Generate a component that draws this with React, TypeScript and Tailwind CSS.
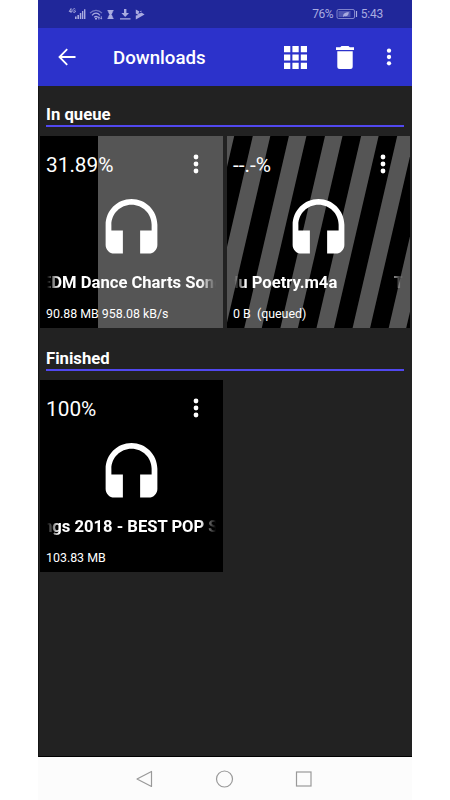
import type { ReactNode } from "react"

const STRIPES = [-10.3, 25.8, 61.9, 98, 134.1, 170.2, 206.3]

function Dots({ className }: { className?: string }) {
  return (
    <svg viewBox="0 0 6 20" fill="currentColor" className={className}>
      <circle cx="3" cy="3" r="2.4" />
      <circle cx="3" cy="10" r="2.4" />
      <circle cx="3" cy="17" r="2.4" />
    </svg>
  )
}

function Headset() {
  return (
    <svg viewBox="0 0 24 24" fill="currentColor" className="absolute left-[56.7px] top-[60px] h-[69px] w-[69px]">
      <path d="M12 1c-4.97 0-9 4.03-9 9v7c0 1.66 1.34 3 3 3h3v-8H5v-2c0-3.87 3.13-7 7-7s7 3.13 7 7v2h-4v8h3c1.66 0 3-1.34 3-3v-7c0-4.97-4.03-9-9-9z" />
    </svg>
  )
}

function StatusBar() {
  return (
    <div className="flex h-7 items-center bg-[#20279a] pl-[30px] pr-[29px] text-[#a9abe0]">
      <svg viewBox="0 0 78 14" fill="currentColor" className="h-[14px] w-[78px]">
        <g fill="none" stroke="currentColor" strokeWidth="0.9">
          <path d="M3 1.5L1.2 4.5H3.7M3 1.5V6M7.3 2.2C6 .8 4.8 2 4.8 3.7S6.2 6.2 7.3 5V3.8H6" />
        </g>
        <path d="M7 9.5h1.6V12H7zM9.4 8H11v4H9.4zM11.8 6h1.5v6h-1.5zM14 4h1.3v8H14zM16 2.3h1.4V12H16z" />
        <g fill="none" stroke="currentColor" strokeWidth="1.2">
          <path d="M22 6.2C25.4 2.4 30.6 2.4 34 6.2" opacity=".6" />
          <path d="M24 8.3C26.5 5.5 29.5 5.5 32 8.3M26.2 10.3C27.3 9 28.8 9 29.8 10.3" />
        </g>
        <path d="M27 10.8h2V12.5h-2zM30.8 9.3l1.4 1.5h-.8v1.6h-1v-1.6h-.9zM33.2 12.5l-1.2-1.4h.8V9.3h.9v1.8h.7z" />
        <path d="M39.5 3h6v1.3h-.7c0 1.5-.6 2.4-1.4 3.2.8.8 1.4 1.7 1.4 3.2h.7V12h-6v-1.3h.7c0-1.5.6-2.4 1.4-3.2-.8-.8-1.4-1.7-1.4-3.2h-.7z" />
        <path d="M56 2h2.4v4h2.6l-3.8 4-3.8-4H56zM52 11.3h10.5v1.2H52z" />
        <path d="M67.8 2.4l3.6 2.1-1.2 2.2 3.6-.9 2.8 1.6-8.8 5V8.6l2.6-.5-2.6-1.6z" />
        <path d="M71.8 4.6l1.6-1.2v2z" />
      </svg>
      <div className="ml-auto flex items-center font-[Roboto] text-[12px] leading-[14px]">
        <span className="w-[23.5px] whitespace-nowrap tracking-[-0.5px]">76%</span>
        <svg viewBox="0 0 22 12" className="h-3 w-[22px]" fill="none" stroke="currentColor">
          <rect x="1" y="1.5" width="17.5" height="9" rx="1.5" strokeWidth="1" opacity=".7" />
          <rect x="2.5" y="3" width="12" height="6" fill="currentColor" stroke="none" opacity=".35" />
          <path d="M20.5 3v6" strokeWidth="1.2" />
          <path d="M7.2 8.5c-.3-3 1.5-4 5.6-4.6-.2 3.4-1.8 5-4.5 4.2l-1 1.1z" fill="currentColor" stroke="none" />
        </svg>
        <span className="ml-[3px] tracking-[-0.2px]">5:43</span>
      </div>
    </div>
  )
}

function AppBar() {
  return (
    <header className="flex h-[58px] items-center bg-[#2c32cb] pl-5 text-white">
      <svg viewBox="0 0 18 18" className="h-[18px] w-[18px]" fill="none" stroke="currentColor" strokeWidth="1.8">
        <path d="M17.5 9H2M9.2 1.2L1.5 9l7.7 7.8" />
      </svg>
      <h1 className="relative top-px ml-[37px] w-[171px] font-[Roboto] text-[18.7px] font-medium leading-6">Downloads</h1>
      <svg viewBox="0 0 23 23" fill="currentColor" className="h-[23px] w-[23px]">
        <path d="M0 0h6.3v6.3H0zM8.4 0h6.3v6.3H8.4zM16.8 0h6.2v6.3h-6.2zM0 8.4h6.3v6.2H0zM8.4 8.4h6.3v6.2H8.4zM16.8 8.4h6.2v6.2h-6.2zM0 16.8h6.3V23H0zM8.4 16.8h6.3V23H8.4zM16.8 16.8h6.2V23h-6.2z" />
      </svg>
      <svg viewBox="0 0 18 23" fill="currentColor" className="ml-[29px] h-[23px] w-[18px]">
        <path d="M5.5 0h7l1.3 1.3H18v2.8H0V1.3h4.2zM1.3 5.3h15.4v15.2A2.5 2.5 0 0 1 14.2 23H3.8a2.5 2.5 0 0 1-2.5-2.5z" />
      </svg>
      <Dots className="ml-[32px] h-[18px] w-[6px]" />
    </header>
  )
}

function SectionTitle({ children }: { children: ReactNode }) {
  return (
    <h2 className="mx-2 mb-[9px] h-[41px] border-b-2 border-[#5148ef] pt-[17px] font-[Roboto] text-[16.7px] font-bold leading-6 text-white">
      {children}
    </h2>
  )
}

type CardProps = {
  percent: string
  title: ReactNode
  info: string
  background?: ReactNode
}

function DownloadCard({ percent, title, info, background }: CardProps) {
  return (
    <div className="relative h-48 w-[183px] overflow-hidden bg-black font-[Roboto] text-white">
      {background}
      <div className="relative flex h-[56px] items-center justify-between pl-1.5 pr-6">
        <span className="pt-px text-[20.8px] leading-6">{percent}</span>
        <Dots className="h-5 w-[6px]" />
      </div>
      <Headset />
      <div className="relative mx-[7px] mt-[79px] h-6 overflow-hidden whitespace-nowrap text-[16.6px] font-bold leading-6 [mask-image:linear-gradient(to_right,transparent,black_12px,black_calc(100%-16px),transparent)]">
        {title}
      </div>
      <div className="relative mt-2.5 whitespace-pre pl-1.5 text-[12.4px] leading-[18px]">{info}</div>
    </div>
  )
}

export default function App() {
  return (
    <div className="h-[800px] w-[450px] overflow-hidden bg-white pl-[38px]">
      <div className="flex h-full w-[374px] flex-col">
        <StatusBar />
        <AppBar />
        <main className="flex-1 border-b border-l border-b-black border-l-[#141414] bg-[#222222]">
          <div className="-ml-px">
            <SectionTitle>In queue</SectionTitle>
            <div className="flex gap-1 pl-0.5">
              <DownloadCard
                percent="31.89%"
                title={<span className="-ml-[5px]">EDM Dance Charts Songs</span>}
                info="90.88 MB 958.08 kB/s"
                background={<div className="absolute inset-y-0 left-[58px] right-0 bg-[#555555]" />}
              />
              <DownloadCard
                percent="--.-%"
                title={
                  <div className="-ml-[5px] -mr-px flex justify-between">
                    <span>du Poetry.m4a</span>
                    <span>T</span>
                  </div>
                }
                info="0 B  (queued)"
                background={
                  <svg viewBox="0 0 183 192" fill="#555555" className="absolute inset-0 h-48 w-[183px]">
                    {STRIPES.map((x) => (
                      <path key={x} d={`M${x} 0h17.5l-44.6 192h-17.5z`} />
                    ))}
                  </svg>
                }
              />
            </div>
            <div className="h-0.5" />
            <SectionTitle>Finished</SectionTitle>
            <div className="pl-0.5">
              <DownloadCard
                percent="100%"
                title={<span className="-ml-[4px]">ngs 2018 - BEST POP SONGS</span>}
                info="103.83 MB"
              />
            </div>
          </div>
        </main>
        <nav className="flex h-[43px] items-center justify-center bg-[#fcfcfc]">
          <svg viewBox="0 0 180 20" className="h-5 w-[180px]" fill="none" stroke="#999999" strokeWidth="1.2">
            <path d="M16.5 2.5v15L2 10z" strokeLinejoin="round" />
            <circle cx="89.5" cy="10" r="8" />
            <rect x="161.5" y="3" width="14.5" height="14" />
          </svg>
        </nav>
      </div>
    </div>
  )
}
